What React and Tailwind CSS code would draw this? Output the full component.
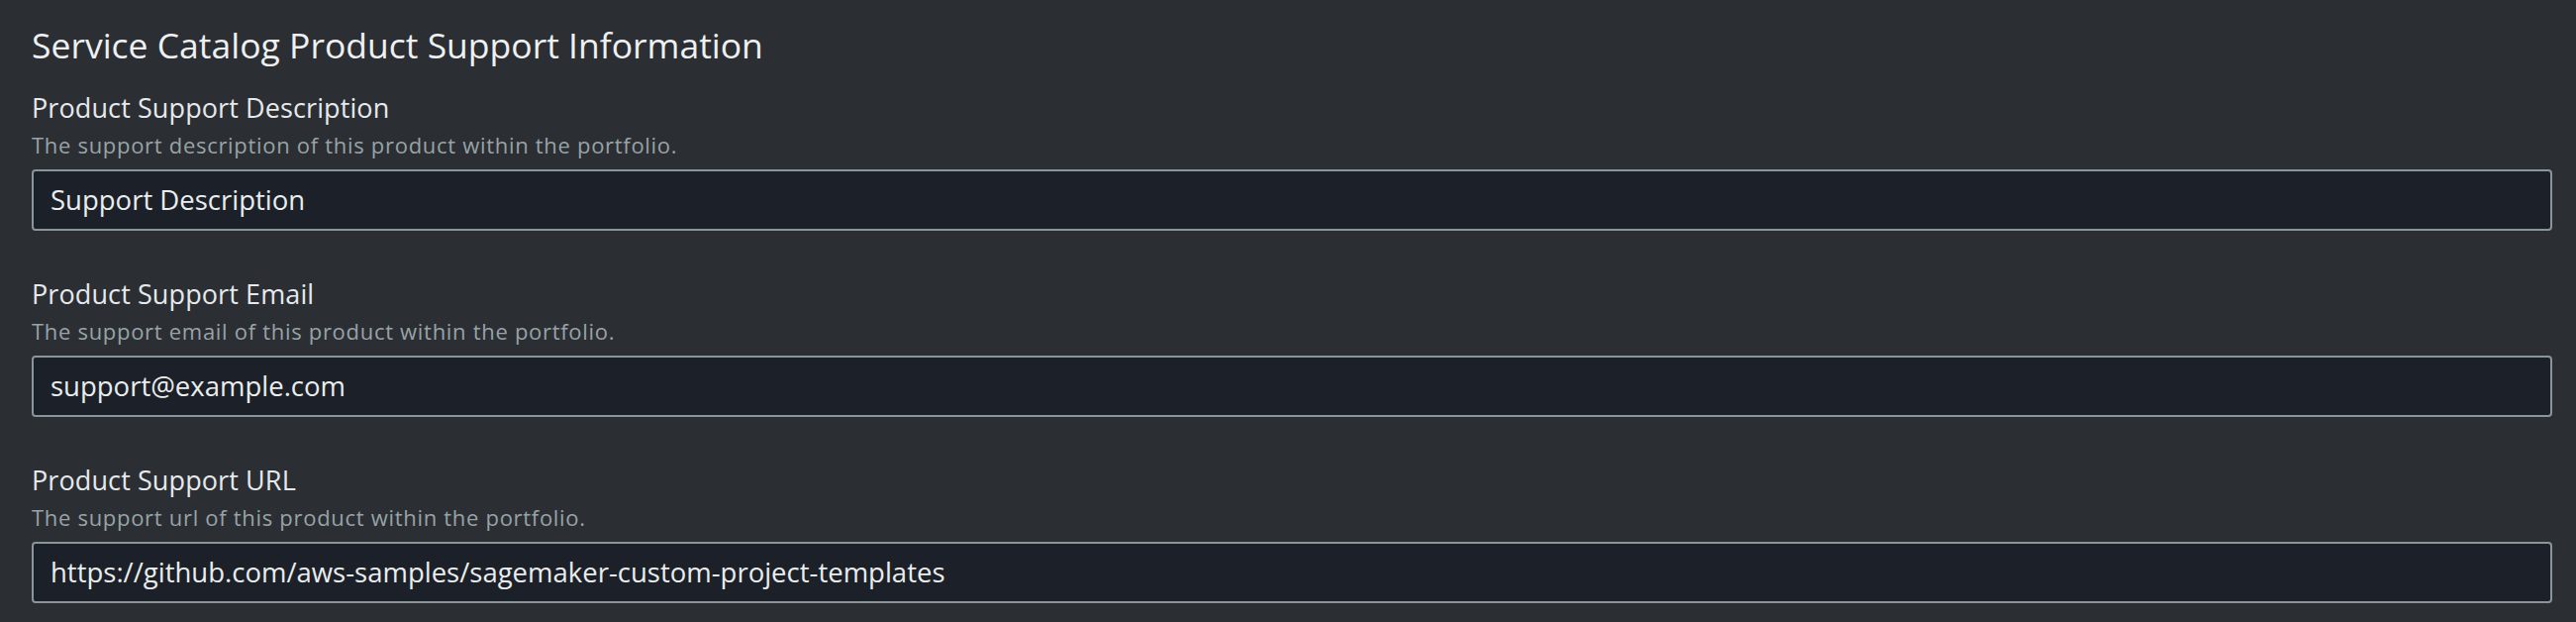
const fields = [
  {
    label: 'Product Support Description',
    help: 'The support description of this product within the portfolio.',
    value: 'Support Description',
  },
  {
    label: 'Product Support Email',
    help: 'The support email of this product within the portfolio.',
    value: 'support@example.com',
  },
  {
    label: 'Product Support URL',
    help: 'The support url of this product within the portfolio.',
    value: 'https://github.com/aws-samples/sagemaker-custom-project-templates',
  },
]

export default function App() {
  return (
    <div className="min-h-[628px] w-full bg-[#2b2e33] pl-[32px] pr-[24px] pt-[23px] font-['Open_Sans',sans-serif]">
      <h2 className="text-[35.5px] leading-[44px] text-[#eef0f1]">Service Catalog Product Support Information</h2>
      <div className="mt-[26px] flex flex-col gap-[48px]">
        {fields.map(f => (
          <div key={f.label} className="flex flex-col">
            <label className="text-[27px] leading-[32px] tracking-[0.1px] text-[#e6e9eb]">{f.label}</label>
            <span className="mt-[7px] text-[22px] font-medium leading-[28px] tracking-[0.7px] text-[#98a3a6]">{f.help}</span>
            <div className="mt-[11px] flex h-[62px] items-center rounded-[4px] border-2 border-[#8a9597] bg-[#1c2028] px-[17px]">
              <span className="text-[27.5px] leading-[32px] text-[#eaeded]">{f.value}</span>
            </div>
          </div>
        ))}
      </div>
    </div>
  )
}
